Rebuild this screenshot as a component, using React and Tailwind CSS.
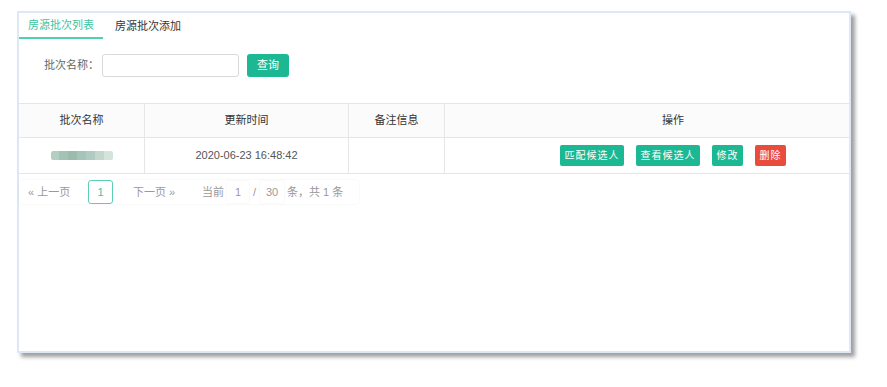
export default function App() {
  const font = { fontFamily: '"Liberation Sans", "Noto Sans CJK SC", sans-serif' };
  return (
    <div className="w-[887px] h-[387px] bg-white pt-[11px] pl-[17px]" style={font}>
      <div className="w-[834px] h-[342px] border-2 border-[#dce8f5] bg-white shadow-[4px_4px_4px_rgba(0,0,0,0.38)] flex flex-col">
        {/* Tabs */}
        <div className="flex h-[26px] items-stretch text-[11px]">
          <div className="px-[9px] flex items-center text-[#3ec3a3] border-b-2 border-[#4fd0b0]">房源批次列表</div>
          <div className="pl-[12px] flex items-center text-[#333]">房源批次添加</div>
        </div>
        {/* Search */}
        <div className="flex items-center h-[23px] mt-[15px] pl-[25px] text-[11px]">
          <span className="text-[#666] w-[58px]">批次名称：</span>
          <div className="w-[137px] h-[23px] border border-[#d9d9d9] rounded-[3px] bg-white"></div>
          <button className="ml-[8px] w-[42px] h-[23px] rounded-[3px] bg-[#1cb894] text-white text-[11px]">查询</button>
        </div>
        {/* Table */}
        <div className="mt-[26px] border-t border-[#e6e6e6] text-[11px]">
          <div className="grid grid-cols-[126px_204px_96px_1fr] h-[34px] bg-[#fbfbfb] text-[#333] border-b border-[#e6e6e6]">
            <div className="flex items-center justify-center border-r border-[#e6e6e6]">批次名称</div>
            <div className="flex items-center justify-center border-r border-[#e6e6e6]">更新时间</div>
            <div className="flex items-center justify-center border-r border-[#e6e6e6]">备注信息</div>
            <div className="flex items-center justify-center pl-[52px]">操作</div>
          </div>
          <div className="grid grid-cols-[126px_204px_96px_1fr] h-[36px] text-[#555] border-b border-[#e6e6e6]">
            <div className="flex items-center justify-center border-r border-[#e6e6e6]">
              <div className="flex h-[9px] w-[62px] rounded-[2px] overflow-hidden">
                <div className="flex-1 bg-[#b4cec4]"></div>
                <div className="flex-1 bg-[#a3c3b7]"></div>
                <div className="flex-1 bg-[#99bcae]"></div>
                <div className="flex-1 bg-[#a6c5b9]"></div>
                <div className="flex-1 bg-[#b0cbc1]"></div>
                <div className="flex-1 bg-[#c3d7cf]"></div>
                <div className="flex-1 bg-[#d5e3dd]"></div>
              </div>
            </div>
            <div className="flex items-center justify-center border-r border-[#e6e6e6]">2020-06-23 16:48:42</div>
            <div className="border-r border-[#e6e6e6]"></div>
            <div className="flex items-center pl-[115px] gap-[12px] text-[10px] tracking-[1px] text-white">
              <button className="w-[64px] h-[21px] rounded-[2px] bg-[#1cb894]">匹配候选人</button>
              <button className="w-[64px] h-[21px] rounded-[2px] bg-[#1cb894]">查看候选人</button>
              <button className="w-[31px] h-[21px] rounded-[2px] bg-[#1cb894]">修改</button>
              <button className="w-[31px] h-[21px] rounded-[2px] bg-[#e74c3c]">删除</button>
            </div>
          </div>
        </div>
        {/* Pagination */}
        <div className="mt-[6px] w-[340px] h-[24px] flex items-center text-[11px] text-[#999] rounded-[3px] shadow-[0_0_2px_rgba(0,0,0,0.08)]">
          <span className="ml-[9px] w-[60px]">« 上一页</span>
          <span className="w-[25px] h-[24px] border border-[#5ccfb4] rounded-[3px] flex items-center justify-center text-[#3ec3a3]">1</span>
          <span className="ml-[20px] w-[69px]">下一页 »</span>
          <span>当前</span>
          <span className="ml-[3px] w-[22px] h-[22px] rounded-[2px] shadow-[0_0_2px_rgba(0,0,0,0.08)] flex items-center justify-center">1</span>
          <span className="mx-[4px]">/</span>
          <span className="w-[24px] h-[22px] rounded-[2px] shadow-[0_0_2px_rgba(0,0,0,0.08)] flex items-center justify-center">30</span>
          <span className="ml-[3px]">条，共 1 条</span>
        </div>
      </div>
    </div>
  );
}
